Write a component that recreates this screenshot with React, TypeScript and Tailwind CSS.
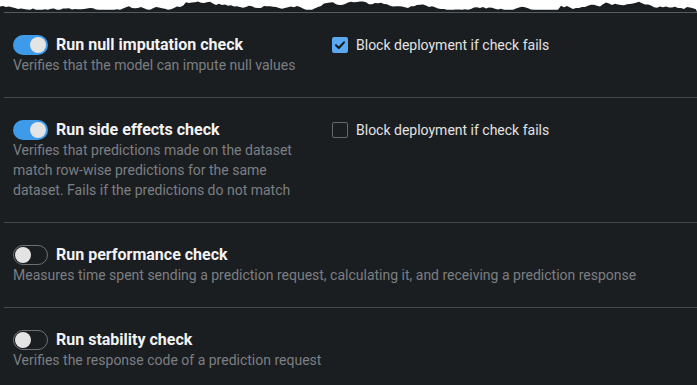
import { useState } from "react";

type Check = {
  title: string;
  description: string;
  enabled: boolean;
  block?: boolean;
};

const checks: Check[] = [
  {
    title: "Run null imputation check",
    description: "Verifies that the model can impute null values",
    enabled: true,
    block: true,
  },
  {
    title: "Run side effects check",
    description:
      "Verifies that predictions made on the dataset match row-wise predictions for the same dataset. Fails if the predictions do not match",
    enabled: true,
    block: false,
  },
  {
    title: "Run performance check",
    description:
      "Measures time spent sending a prediction request, calculating it, and receiving a prediction response",
    enabled: false,
  },
  {
    title: "Run stability check",
    description: "Verifies the response code of a prediction request",
    enabled: false,
  },
];

// jagged "torn" top edge of the cropped screenshot
function tornPath(width: number) {
  let seed = 7;
  const rand = () => {
    seed = (seed * 16807) % 2147483647;
    return seed / 2147483647;
  };
  let y = 8;
  const pts: string[] = [`M0 12 L0 ${y}`];
  for (let x = 0; x <= width; x += 3) {
    y += (rand() - 0.5) * 3.2;
    if (rand() > 0.93) y -= 3;
    y = Math.min(10, Math.max(1, y));
    y += (8 - y) * 0.08;
    pts.push(`L${x} ${y.toFixed(1)}`);
  }
  pts.push(`L${width} 12 Z`);
  return pts.join(" ");
}

const torn = tornPath(697);

function Toggle({ on }: { on: boolean }) {
  return (
    <span
      className={
        on
          ? "flex h-[20px] w-[35px] shrink-0 items-center justify-end rounded-full bg-[#3d9be9] px-[2px]"
          : "flex h-[20px] w-[35px] shrink-0 items-center justify-start rounded-full border border-[#6d7074] px-[1px]"
      }
    >
      <span className="h-[16px] w-[16px] rounded-full bg-[#e4e4e4]" />
    </span>
  );
}

function Checkbox({ checked }: { checked: boolean }) {
  return checked ? (
    <span className="flex h-[16px] w-[16px] shrink-0 items-center justify-center rounded-[2px] bg-[#5aa9ee]">
      <svg width="12" height="12" viewBox="0 0 12 12" fill="none">
        <path
          d="M2 6.2 L4.8 9 L10 3.3"
          stroke="#14171a"
          strokeWidth="2"
          strokeLinecap="round"
          strokeLinejoin="round"
        />
      </svg>
    </span>
  ) : (
    <span className="h-[16px] w-[16px] shrink-0 rounded-[2px] border border-[#64676b]" />
  );
}

export default function App() {
  const [items] = useState(checks);

  return (
    <div
      className="h-[385px] w-[697px] overflow-hidden bg-[#1b1e21]"
      style={{ fontFamily: "Roboto, 'Noto Sans', sans-serif" }}
    >
      <svg width="697" height="12" viewBox="0 0 697 12" className="block bg-white">
        <path d={torn} fill="#1b1e21" />
      </svg>
      <div className="ml-[4px] border-t border-[#575a5e]">
        {items.map((c, i) => (
          <div
            key={c.title}
            className={
              i < items.length - 1
                ? "flex border-b border-[#45484c] px-[9px] py-[22px]"
                : "flex px-[9px] py-[22px]"
            }
          >
            <div className={c.block === undefined ? "flex-1" : "w-[300px] shrink-0"}>
              <div className="flex h-[20px] items-center gap-[8px]">
                <Toggle on={c.enabled} />
                <span className="text-[16px] font-bold text-[#f2f2f2]">{c.title}</span>
              </div>
              <p className="text-[14px] leading-[20px] text-[#7b7e82]">{c.description}</p>
            </div>
            {c.block !== undefined && (
              <div className="ml-[19px] flex h-[20px] items-center gap-[8px]">
                <Checkbox checked={c.block} />
                <span className="text-[14px] text-[#e2e2e2]">Block deployment if check fails</span>
              </div>
            )}
          </div>
        ))}
      </div>
    </div>
  );
}
